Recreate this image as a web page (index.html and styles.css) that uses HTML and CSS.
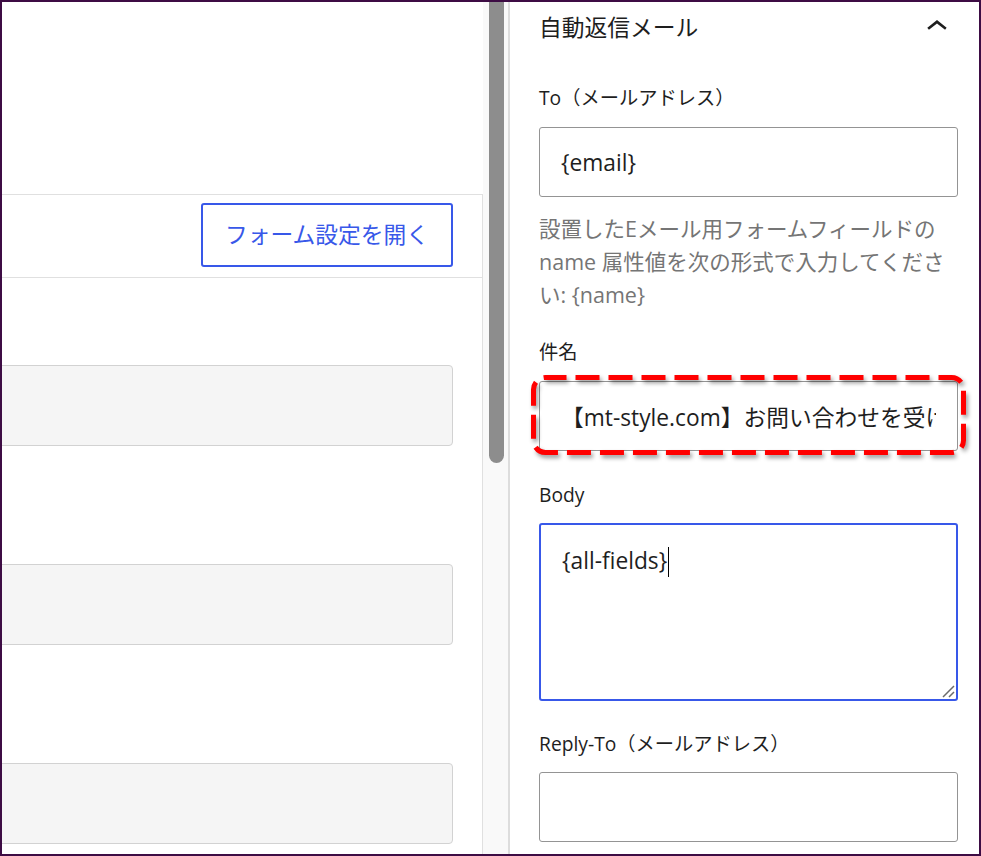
FILE: index.html
```html
<!DOCTYPE html>
<html lang="ja">
<head>
<meta charset="utf-8">
<title>自動返信メール</title>
<link rel="stylesheet" href="styles.css">
</head>
<body>
<div class="frame">
  <main class="canvas">
    <div class="canvas-top"></div>
    <section class="form-card">
      <div class="form-card-head">
        <button class="btn-outline" type="button">フォーム設定を開く</button>
      </div>
      <div class="form-card-body">
        <div class="ghost-input"></div>
        <div class="ghost-input"></div>
        <div class="ghost-input"></div>
      </div>
    </section>
  </main>
  <div class="scrollbar"><div class="scrollbar-thumb"></div></div>
  <aside class="sidebar">
    <div class="panel-head">
      <h2 class="panel-title">自動返信メール</h2>
      <svg class="chevron" viewBox="0 0 24 24" width="42" height="42" aria-hidden="true"><path d="M6.5 12.4L12 8l5.5 4.4-.9 1.2L12 10l-4.6 3.6-1-1.2z"/></svg>
    </div>

    <div class="field field-to">
      <label class="field-label">To（メールアドレス）</label>
      <input class="field-input" type="text" value="{email}">
      <p class="field-help">設置したEメール用フォームフィールドの name 属性値を次の形式で入力してください: {name}</p>
    </div>

    <div class="field field-subject">
      <label class="field-label">件名</label>
      <div class="subject-wrap">
        <input class="field-input" type="text" value="【mt-style.com】お問い合わせを受け付けました">
        <svg class="highlight" width="438" height="88" aria-hidden="true"><rect x="3.5" y="3.5" width="430" height="75" rx="12" ry="12"/></svg>
      </div>
    </div>

    <div class="field field-body">
      <label class="field-label">Body</label>
      <div class="field-textarea">{all-fields}<span class="caret"></span>
        <svg class="resize" width="14" height="14" aria-hidden="true"><path d="M2 13 L13 2 M8 13 L13 8"/></svg>
      </div>
    </div>

    <div class="field field-reply">
      <label class="field-label">Reply-To（メールアドレス）</label>
      <input class="field-input" type="text" value="">
    </div>
  </aside>
</div>
</body>
</html>
```

FILE: styles.css
```css
* { box-sizing: border-box; }

html, body {
  margin: 0;
  padding: 0;
  background: #ffffff;
}

body {
  font-family: "Open Sans", "Noto Sans CJK JP", sans-serif;
  color: #1e1e1e;
}

.frame {
  width: 981px;
  height: 856px;
  border: 2px solid #3d0c44;
  display: flex;
  overflow: hidden;
  background: #ffffff;
}

/* ---------- left canvas ---------- */
.canvas {
  width: 481px;
  flex: none;
  overflow: hidden;
  display: flex;
  flex-direction: column;
}

.canvas-top {
  height: 192px;
  flex: none;
}

.form-card {
  flex: 1;
  border-top: 1px solid #e0e0e0;
  border-right: 1px solid #e0e0e0;
}

.form-card-head {
  height: 83px;
  border-bottom: 1px solid #e0e0e0;
  display: flex;
  justify-content: flex-end;
  align-items: flex-start;
  padding: 8px 29px 0 0;
}

.btn-outline {
  width: 252px;
  height: 64px;
  border: 2px solid #3858e9;
  border-radius: 3px;
  background: #ffffff;
  color: #3858e9;
  font-family: "Open Sans", "Noto Sans CJK JP", sans-serif;
  font-size: 22.75px;
  line-height: 1;
  padding: 0;
  cursor: pointer;
}

.form-card-body {
  display: flex;
  flex-direction: column;
  gap: 118px;
  padding-top: 87px;
}

.ghost-input {
  height: 81px;
  margin-left: -40px;
  margin-right: 29px;
  background: #f5f5f5;
  border: 1px solid #d2d2d2;
  border-radius: 4px;
  flex: none;
}

/* ---------- scrollbar ---------- */
.scrollbar {
  width: 25px;
  flex: none;
  background: #f9f9f9;
  padding-left: 6px;
}

.scrollbar-thumb {
  width: 15px;
  height: 461px;
  background: #8d8d8d;
  border-radius: 0 0 8px 8px;
}

/* ---------- sidebar ---------- */
.sidebar {
  flex: 1;
  border-left: 2px solid #dddddd;
  padding: 0 21px 0 29px;
}

.panel-head {
  height: 52px;
  display: flex;
  align-items: center;
  justify-content: space-between;
}

.panel-title {
  margin: 0;
  font-size: 22.75px;
  font-weight: 400;
  line-height: 1;
  color: #1e1e1e;
}

.chevron {
  fill: #1e1e1e;
  flex: none;
  margin-top: -2px;
}

.field-label {
  display: block;
  font-size: 19.25px;
  line-height: 26px;
  color: #1e1e1e;
}

.field-input {
  display: block;
  width: 100%;
  height: 70px;
  margin: 16px 0 0;
  padding: 0 21px;
  border: 1px solid #949494;
  border-radius: 3px;
  background: #ffffff;
  font-family: "Open Sans", "Noto Sans CJK JP", sans-serif;
  font-size: 22.75px;
  color: #1e1e1e;
  outline: none;
}

.field-help {
  margin: 15px 0 0;
  font-size: 21.5px;
  line-height: 33px;
  color: #757575;
}

.field-to { margin-top: 31px; }
.field-subject { margin-top: 28px; }
.field-body { margin-top: 31px; }
.field-reply { margin-top: 30px; }

.field-reply .field-input { margin-top: 15px; }

.subject-wrap {
  position: relative;
}

.highlight {
  position: absolute;
  left: -9px;
  top: -7px;
  overflow: visible;
  pointer-events: none;
  filter: drop-shadow(2px 3px 2px rgba(0, 0, 0, 0.4));
}

.highlight rect {
  fill: none;
  stroke: #ff0000;
  stroke-width: 5;
  stroke-dasharray: 24 9;
  stroke-dashoffset: 3;
}

.field-textarea {
  position: relative;
  height: 178px;
  margin-top: 15px;
  padding: 19px 21px 0;
  border: 2px solid #3858e9;
  border-radius: 3px;
  font-size: 22.75px;
  line-height: 33px;
  color: #1e1e1e;
}

.caret {
  display: inline-block;
  width: 1px;
  height: 30px;
  background: #000000;
  vertical-align: -8px;
  margin-left: 1px;
}

.resize {
  position: absolute;
  right: 1px;
  bottom: 1px;
  fill: none;
  stroke: #6b6b6b;
  stroke-width: 1.5;
}
```
